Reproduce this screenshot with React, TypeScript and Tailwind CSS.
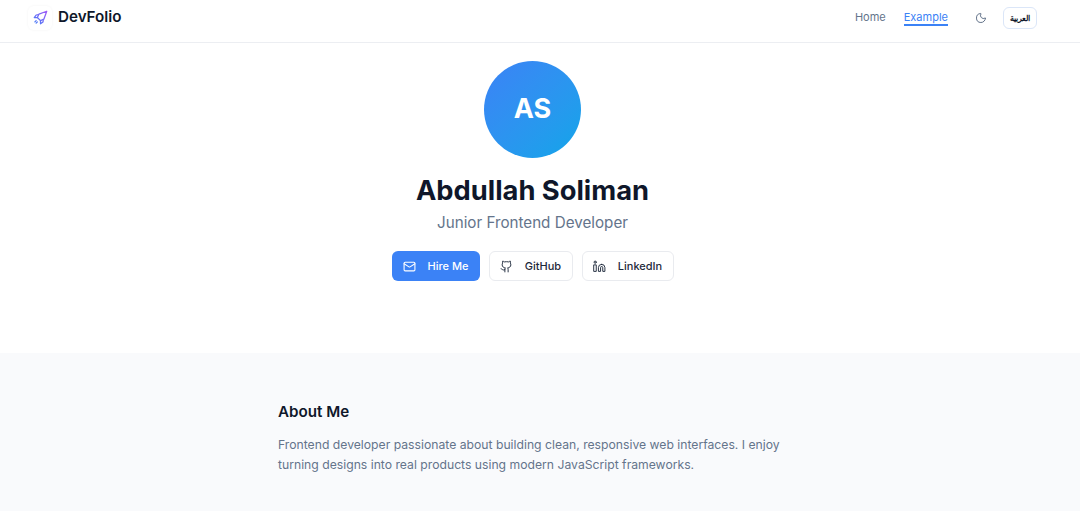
import { Mail, Moon } from 'lucide-react';

function RocketIcon() {
    return (
        <svg width="15" height="15" viewBox="0 0 24 24" fill="none" strokeWidth="2" strokeLinecap="round" strokeLinejoin="round">
            <defs>
                <linearGradient id="rocket" x1="0" y1="24" x2="24" y2="0" gradientUnits="userSpaceOnUse">
                    <stop offset="0" stopColor="#3b82f6" />
                    <stop offset="1" stopColor="#a855f7" />
                </linearGradient>
            </defs>
            <path stroke="url(#rocket)" d="M22 2 9.5 6.5 7 12l5 5 5.5-2.5z" />
            <path stroke="url(#rocket)" d="M7 12H2l3-4 3.5-.5" />
            <path stroke="url(#rocket)" d="M12 17v5l4-3 .5-3.5" />
            <path stroke="url(#rocket)" d="m5 17-2 2M7 19l-2 2" />
        </svg>
    );
}

function GithubIcon() {
    return (
        <svg width="13" height="13" viewBox="0 0 24 24" fill="none" stroke="currentColor" strokeWidth="1.75" strokeLinecap="round" strokeLinejoin="round">
            <path d="M15 22v-4a4.8 4.8 0 0 0-1-3.5c3 0 6-2 6-5.5.08-1.25-.27-2.48-1-3.5.28-1.15.28-2.35 0-3.5 0 0-1 0-3 1.5-2.64-.5-5.36-.5-8 0C6 2 5 2 5 2c-.3 1.15-.3 2.35 0 3.5A5.403 5.403 0 0 0 4 9c0 3.5 3 5.5 6 5.5-.39.49-.68 1.05-.85 1.65-.17.6-.22 1.23-.15 1.85v4" />
            <path d="M9 18c-4.51 2-5-2-7-2" />
        </svg>
    );
}

function LinkedinIcon() {
    return (
        <svg width="13" height="13" viewBox="0 0 24 24" fill="none" stroke="currentColor" strokeWidth="1.75" strokeLinecap="round" strokeLinejoin="round">
            <path d="M16 8a6 6 0 0 1 6 6v7h-4v-7a2 2 0 0 0-2-2 2 2 0 0 0-2 2v7h-4v-7a6 6 0 0 1 6-6z" />
            <rect width="4" height="12" x="2" y="9" />
            <circle cx="4" cy="4" r="2" />
        </svg>
    );
}

export default function App() {
    return (
        <div className="h-[511px] overflow-hidden bg-white font-['Inter',sans-serif] text-[#0f172a]">
            <nav className="h-[43px] border-b border-[#eceef2] pl-[28px] pr-[43px] pb-[7px] flex items-center justify-between">
                <div className="flex items-center gap-1.5">
                    <div className="w-6 h-6 rounded-md flex items-center justify-center shadow-[0_0_3px_rgba(15,23,42,0.05)]">
                        <RocketIcon />
                    </div>
                    <span className="text-[15.2px] font-semibold">DevFolio</span>
                </div>
                <div className="flex items-center">
                    <a className="text-[11px] text-[#64748b]">Home</a>
                    <a className="ml-[18px] mt-[1px] text-[11px] text-[#3b82f6] border-b-2 border-[#3b82f6] leading-[13px]">Example</a>
                    <Moon className="ml-[27px] w-3 h-3 text-[#64748b]" />
                    <button className="ml-[16px] w-[34px] h-[22px] rounded-md border border-[#dbe6f8] text-[8px] font-semibold text-[#0f172a] font-['Noto_Sans',sans-serif]">العربية</button>
                </div>
            </nav>
            <section className="h-[310px] pr-[15px] pt-[18px] flex flex-col items-center">
                <div className="w-[97px] h-[97px] rounded-full bg-gradient-to-br from-[#3b82f6] to-[#0ea5e9] flex items-center justify-center text-[27px] font-bold text-white">AS</div>
                <h1 className="mt-[15px] text-[27.3px] leading-[36px] font-bold">Abdullah Soliman</h1>
                <p className="mt-[2px] text-[15.2px] leading-[24px] text-[#64748b]">Junior Frontend Developer</p>
                <div className="mt-[16px] flex gap-[9px]">
                    <button className="h-[30px] w-[88px] rounded-md bg-[#3b82f6] text-white text-[11px] font-medium flex items-center justify-center gap-3">
                        <Mail className="w-[13px] h-[13px]" />
                        Hire Me
                    </button>
                    <button className="h-[30px] w-[84px] rounded-md border border-[#e9ebef] text-[#1e293b] text-[11px] font-medium flex items-center justify-center gap-3">
                        <GithubIcon />
                        GitHub
                    </button>
                    <button className="h-[30px] w-[92px] rounded-md border border-[#e9ebef] text-[#1e293b] text-[11px] font-medium flex items-center justify-center gap-3">
                        <LinkedinIcon />
                        LinkedIn
                    </button>
                </div>
            </section>
            <section className="h-[158px] bg-[#f9fafc] pl-[278px] pt-[49px]">
                <h2 className="text-[15.2px] leading-[20px] font-semibold">About Me</h2>
                <p className="mt-[13px] w-[510px] text-[12.2px] leading-[20px] text-[#64748b]">Frontend developer passionate about building clean, responsive web interfaces. I enjoy turning designs into real products using modern JavaScript frameworks.</p>
            </section>
        </div>
    );
}
